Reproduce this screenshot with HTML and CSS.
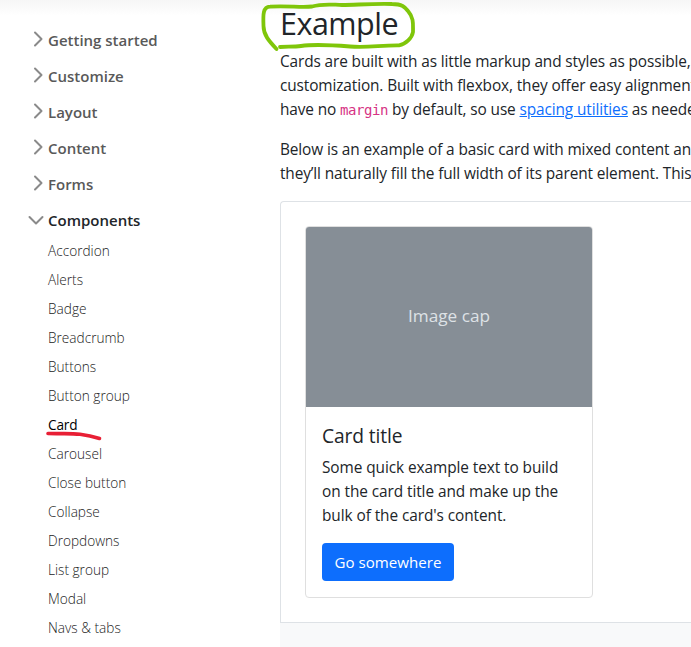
FILE: index.html
```html
<!DOCTYPE html>
<html lang="en">
<head>
<meta charset="utf-8">
<title>Cards</title>
<link rel="stylesheet" href="styles.css">
</head>
<body>
<svg class="defs" width="0" height="0"><symbol id="chev" viewBox="0 0 16 16"><path d="M5 14.500l6.500-6.500-6.500-6.500" fill="none" stroke="currentColor" stroke-width="2" stroke-linecap="round" stroke-linejoin="round"/></symbol></svg>
<div class="page">
<nav class="sidebar">
<ul class="groups">
<li class="group"><svg class="chev"><use href="#chev"/></svg><span>Getting started</span></li>
<li class="group"><svg class="chev"><use href="#chev"/></svg><span>Customize</span></li>
<li class="group"><svg class="chev"><use href="#chev"/></svg><span>Layout</span></li>
<li class="group"><svg class="chev"><use href="#chev"/></svg><span>Content</span></li>
<li class="group"><svg class="chev"><use href="#chev"/></svg><span>Forms</span></li>
<li class="group open"><svg class="chev"><use href="#chev"/></svg><span>Components</span></li>
</ul>
<ul class="links">
<li>Accordion</li>
<li>Alerts</li>
<li>Badge</li>
<li>Breadcrumb</li>
<li>Buttons</li>
<li>Button group</li>
<li class="active">Card<svg class="underline" viewBox="0 0 58 12"><path d="M3 3.5C14 4 25 3 35 4.3S48 6.500 54.500 8.500"/></svg></li>
<li>Carousel</li>
<li>Close button</li>
<li>Collapse</li>
<li>Dropdowns</li>
<li>List group</li>
<li>Modal</li>
<li>Navs &amp; tabs</li>
</ul>
</nav>
<main class="content">
<h2>Example<svg class="circle" viewBox="0 0 170 56"><path d="M20.500 49C13 41 7.500 35 7.500 26C7 14 7 7 14 6.700C32 5.500 46 8 56 6.500C66 3.500 72 4.500 86 5C100 5 114 3.500 136 4C146 4 149 7 152 11C158 18 157 24 157 32C156 38 150 44 143 45.300C125 45 112 48 94 46.500C75 45 58 44 45 46C38 47 32 46.500 24 47"/></svg></h2>
<p>Cards are built with as little markup and styles as possible,<br>customization. Built with flexbox, they offer easy alignment<br>have no <code>margin</code> by default, so use <a>spacing utilities</a> as neede</p>
<p>Below is an example of a basic card with mixed content an<br>they’ll naturally fill the full width of its parent element. This</p>
<div class="example">
<div class="card">
<div class="cap">Image cap</div>
<div class="body">
<h5>Card title</h5>
<p class="text">Some quick example text to build<br>on the card title and make up the<br>bulk of the card's content.</p>
<span class="btn">Go somewhere</span>
</div>
</div>
</div>
<div class="code-area"></div>
</main>
</div>
</body>
</html>
```
FILE: styles.css
```css
* { box-sizing: border-box; }
body {
  margin: 0;
  height: 647px;
  overflow: hidden;
  background: linear-gradient(#f6f6f6, #fff 16px);
  color: #212529;
  font: 15.4px/24px "Open Sans", "Noto Sans", sans-serif;
}
.defs { position: absolute; }
.page { display: grid; grid-template-columns: 280px minmax(0, 1fr); height: 647px; }
.sidebar { padding-top: 22px; }
ul { list-style: none; margin: 0; padding: 0; }
.group {
  display: flex;
  align-items: center;
  height: 36px;
  padding-left: 28px;
  color: #595959;
  font-size: 15px;
  font-weight: 600;
}
.chev { width: 16px; height: 16px; margin: -3px 2px 0 2px; color: #8a8a8a; }
.open { color: #212529; }
.open .chev { transform: rotate(90deg); margin: 0 4px 0 0; }
.links { padding: 0 0 0 48px; margin-top: -2px; }
.links li {
  position: relative;
  height: 29px;
  line-height: 29px;
  font-size: 13.65px;
  font-weight: 300;
  color: #222;
}
.links .active { color: #000; font-weight: 400; letter-spacing: -.2px; }
.underline { position: absolute; left: -3px; top: 20px; width: 58px; height: 12px; }
.underline path { fill: none; stroke: #e81f35; stroke-width: 3.6; stroke-linecap: round; }
.content { white-space: nowrap; padding-top: 4px; overflow: clip; overflow-clip-margin: 30px; }
h2 { position: relative; margin: 0 0 8px; font-size: 30.5px; letter-spacing: -.5px; line-height: 38px; font-weight: 400; }
.circle { position: absolute; left: -24px; top: -4px; width: 170px; height: 56px; }
.circle path { fill: none; stroke: #7fc60a; stroke-width: 3.8; stroke-linecap: round; stroke-linejoin: round; }
p { margin: 0 0 16px; letter-spacing: -.115px; }
p + p { margin-bottom: 15px; }
code { font: 14px/20px "DejaVu Sans Mono", monospace; letter-spacing: -.43px; color: #d63384; }
a { color: #0d6efd; text-decoration: underline; }
.example { border: 1px solid #dee2e6; border-radius: 4px 0 0 0; padding: 24px; height: 422px; border-right: 0; }
.card { width: 288px; height: 372px; border: 1px solid #dfdfdf; border-radius: 4px; overflow: hidden; background: #fff; }
.cap {
  height: 180px;
  padding-bottom: 2px;
  background: #868e96;
  color: #dee2e6;
  font-size: 17.2px;
  display: flex;
  align-items: center;
  justify-content: center;
}
.body { padding: 17px 16px 16px; }
h5 { margin: 0 0 8px; font-size: 19.2px; letter-spacing: -.1px; line-height: 24px; font-weight: 400; }
.body .text { margin-bottom: 15px; letter-spacing: -.075px; }
.btn {
  display: block;
  width: 132px;
  height: 38px;
  line-height: 38px;
  text-align: center;
  border-radius: 4px;
  font-size: 15.1px;
  background: #0d6efd;
  color: #fff;
}
.code-area { height: 40px; background: #f8f9fa; }
```
